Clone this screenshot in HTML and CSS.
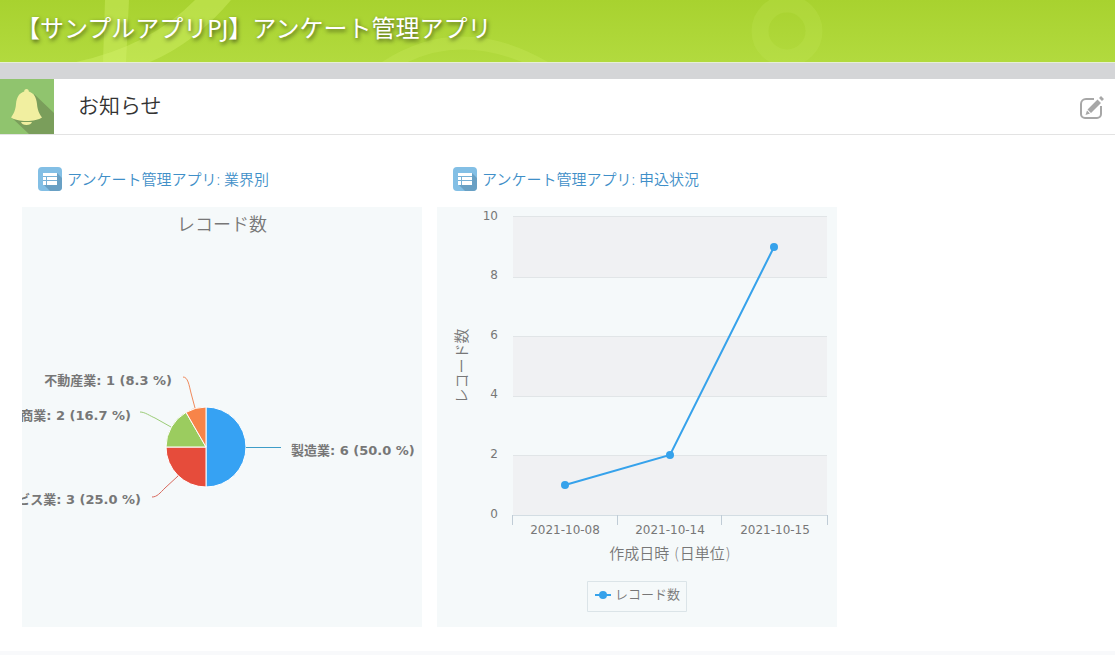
FILE: index.html
```html
<!DOCTYPE html>
<html lang="ja">
<head>
<meta charset="utf-8">
<title>アンケート管理アプリ</title>
<link rel="stylesheet" href="styles.css">
</head>
<body>
<header class="space-header">
  <svg class="space-art" width="900" height="62" viewBox="0 0 900 62" aria-hidden="true">
    <path d="M105 0h24l-3 62h-23z" fill="#d4f36c" fill-opacity=".4"/>
    <path d="M195 0h36Q195 43 150 62H76Q150 46 195 0z" fill="#d4f36c" fill-opacity=".4"/>
    <path d="M382 62Q460 11 548 62H522Q460 37 408 62z" fill="#d4f36c" fill-opacity=".22"/>
    <circle cx="787" cy="31" r="27" fill="none" stroke="#c8ea60" stroke-opacity=".2" stroke-width="17"/>
  </svg>
  <h1 class="space-title">【サンプルアプリPJ】アンケート管理アプリ</h1>
</header>
<main class="space-body">
  <div class="notice-bar">
    <svg class="notice-icon" width="54" height="55" viewBox="0 0 54 55" aria-hidden="true">
      <path fill="#90c46e" d="M0 0h54v55H0z"/>
      <path fill="#7a9e5b" d="M34 15l20 19v21H29L11 38l24-2z"/>
      <path fill="#f1efa0" d="M26.500 10c1.500 0 2.300 1 2.300 2.400 5 1.600 7.600 5.600 8.200 12.600.5 6 2 9.500 5 13.500-3 2.300-9 3.500-15.500 3.500S14 40.800 11 38.500c3-4 4.500-7.500 5-13.500.6-7 3.200-11 8.200-12.600 0-1.400.8-2.400 2.300-2.400zM21 43h11c-.6 2-2.600 3-5.500 3S21.600 45 21 43z"/>
    </svg>
    <h2 class="notice-title">お知らせ</h2>
    <button class="edit-button" type="button" aria-label="編集">
      <svg width="24" height="24" viewBox="0 0 24 24" aria-hidden="true">
        <path d="M14 3H6a5 5 0 0 0-5 5v10a4 4 0 0 0 4 4h12a4 4 0 0 0 4-4v-8" fill="none" stroke="#a7a7a7" stroke-width="2"/>
        <path fill="#a7a7a7" d="M17.500 3.500l3.500 3.500L11 17l-3.500-3.500zM19 2l2-2 3 3-2 2zM7 14.500l3 3L5.500 19z"/>
      </svg>
    </button>
  </div>
  <div class="widgets">
    <section class="widget">
      <h3 class="widget-title">
        <svg width="24" height="24" viewBox="0 0 24 24" aria-hidden="true">
          <rect width="24" height="24" rx="4" fill="#83bfe5"/>
          <path fill="#69a0c4" d="M19 6l5 5v9a4 4 0 0 1-4 4h-8l-7-7z"/>
          <path fill="#fff" d="M5 6h14v12H5z"/>
          <path fill="none" stroke="#78b1d6" d="M5 9.500h14M5 13.500h14M8.500 9v9"/>
        </svg>
        <a href="#industry">アンケート管理アプリ: 業界別</a>
      </h3>
      <svg class="chart" id="industry" viewBox="0 0 400 420" role="img" aria-label="業界別レコード数">
        <text class="chart-title" x="200" y="24">レコード数</text>
        <g stroke="#fff" stroke-width="1">
          <path fill="#36a2f3" d="M184 240V200a40 40 0 0 1 0 80z"/>
          <path fill="#e64c3b" d="M184 240v40a40 40 0 0 1-40-40z"/>
          <path fill="#9bcc5f" d="M184 240h-40a40 40 0 0 1 20-34.640z"/>
          <path fill="#f78449" d="M184 240l-20-34.640a40 40 0 0 1 20-5.360z"/>
        </g>
        <g fill="none">
          <path stroke="#3e9dc8" d="M224 240.500h35"/>
          <path stroke="#d8695d" d="M130 290c5 0 8-4 13-9l13-12"/>
          <path stroke="#9bcc77" d="M118 205c5 0 10 4 15 6l16 9"/>
          <path stroke="#f08a5c" d="M161 170c5 0 6 8 8 16l4 15"/>
        </g>
        <g class="slice-label">
          <text x="269" y="248">製造業: 6 (50.0 %)</text>
          <text class="label-end" x="119" y="297">サービス業: 3 (25.0 %)</text>
          <text class="label-end" x="109" y="213">商業: 2 (16.7 %)</text>
          <text class="label-end" x="150" y="178">不動産業: 1 (8.3 %)</text>
        </g>
      </svg>
    </section>
    <section class="widget">
      <h3 class="widget-title">
        <svg width="24" height="24" viewBox="0 0 24 24" aria-hidden="true">
          <rect width="24" height="24" rx="4" fill="#83bfe5"/>
          <path fill="#69a0c4" d="M19 6l5 5v9a4 4 0 0 1-4 4h-8l-7-7z"/>
          <path fill="#fff" d="M5 6h14v12H5z"/>
          <path fill="none" stroke="#78b1d6" d="M5 9.500h14M5 13.500h14M8.500 9v9"/>
        </svg>
        <a href="#status">アンケート管理アプリ: 申込状況</a>
      </h3>
      <svg class="chart" id="status" viewBox="0 0 400 420" role="img" aria-label="申込状況レコード数">
        <path fill="#f0f1f3" d="M76 9h314v61H76zM76 129h314v60H76zM76 248h314v60H76z"/>
        <path stroke="#e1e5e7" d="M76 9.500h314M76 70.500h314M76 129.500h314M76 189.500h314M76 248.500h314"/>
        <path stroke="#d3dde3" d="M75 308.500h316"/>
        <path stroke="#c0ccd6" d="M75.500 308v10M180.500 308v10M284.500 308v10M390.500 308v10"/>
        <g class="axis-label label-end">
          <text x="61" y="13">10</text>
          <text x="61" y="72">8</text>
          <text x="61" y="132">6</text>
          <text x="61" y="191">4</text>
          <text x="61" y="251">2</text>
          <text x="61" y="311">0</text>
        </g>
        <g class="axis-label label-middle">
          <text x="128" y="327">2021-10-08</text>
          <text x="233" y="327">2021-10-14</text>
          <text x="338" y="327">2021-10-15</text>
        </g>
        <text class="axis-title" transform="translate(30 159) rotate(-90)">レコード数</text>
        <text class="axis-title" x="233" y="352">作成日時 (日単位)</text>
        <path fill="none" stroke="#36a2eb" stroke-width="2" d="M128 278l105-30L337 40"/>
        <g fill="#36a2eb">
          <circle cx="128" cy="278" r="4"/>
          <circle cx="233" cy="248" r="4"/>
          <circle cx="337" cy="40" r="4"/>
          <path d="M158 387h16v2h-16z"/>
          <circle cx="166" cy="388" r="4"/>
        </g>
        <path fill="none" stroke="#dbe4e8" d="M150.500 374.500h99v30h-99z"/>
        <text class="legend-label" x="178" y="392">レコード数</text>
      </svg>
    </section>
  </div>
</main>
</body>
</html>
```
FILE: styles.css
```css
body {
  margin: 0;
  background: #f8f9fb;
  color: #333;
  font-family: "Noto Sans", "Noto Sans CJK JP", sans-serif;
}

h1, h2, h3 {
  margin: 0;
  font-weight: 350;
}

.space-header {
  position: relative;
  height: 62px;
  overflow: hidden;
  border-bottom: 1px solid #e6efd5;
  background: linear-gradient(#a8d22f, #b2da3e);
}

.space-art {
  position: absolute;
  top: 0;
  left: 0;
}

.space-title {
  position: relative;
  padding-left: 16px;
  color: #fff;
  font-size: 24px;
  font-weight: 400;
  line-height: 56px;
  text-shadow: 1px 2px 4px rgba(0, 0, 0, 0.6);
  white-space: nowrap;
}

.space-body {
  border-top: 16px solid #d4d5d7;
  background: #fff;
}

.notice-bar {
  display: flex;
  align-items: center;
  border-bottom: 1px solid #e3e3e3;
}

.notice-icon {
  display: block;
}

.notice-title {
  flex: 1;
  padding: 0 24px 4px;
  font-size: 21px;
  line-height: 48px;
}

.edit-button {
  display: flex;
  margin-right: 11px;
  padding: 2px 0 0;
  border: 0;
  background: none;
  cursor: pointer;
}

.widgets {
  display: flex;
  flex-wrap: wrap;
  gap: 15px;
  padding: 32px 22px 24px;
}

.widget {
  flex: 0 1 400px;
  min-width: 0;
}

.widget-title {
  display: flex;
  align-items: center;
  gap: 5px;
  padding: 0 0 16px 16px;
  font-size: 15px;
  line-height: 24px;
}

.widget-title a {
  color: #3f8fc8;
  text-decoration: none;
}

.chart {
  display: block;
  width: 100%;
  background: #f5f9fa;
  fill: #777;
  font-family: "DejaVu Sans", "Noto Sans CJK JP", sans-serif;
}

.chart-title,
.axis-title {
  font-weight: 350;
  text-anchor: middle;
}

.chart-title {
  font-size: 18px;
}

.axis-title {
  font-size: 15px;
}

.axis-label {
  font-size: 12px;
}

.legend-label {
  font-size: 13px;
  font-weight: 350;
}

.slice-label {
  font-size: 13px;
  font-weight: 700;
}

.label-end {
  text-anchor: end;
}

.label-middle {
  text-anchor: middle;
}
```
